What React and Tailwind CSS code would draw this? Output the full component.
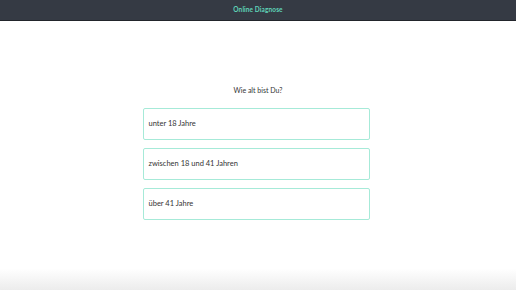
const options = ['unter 18 Jahre', 'zwischen 18 und 41 Jahren', 'über 41 Jahre'];

export default function App() {
  return (
    <div className="w-[516px] h-[290px] flex flex-col bg-white font-['Lato',sans-serif] overflow-hidden">
      <header className="h-[21px] shrink-0 bg-[#353a44] border-b border-[#22252b] flex items-center justify-center">
        <span className="text-[6.5px] font-bold text-[#5fd3b8] tracking-[0.1px]">Online Diagnose</span>
      </header>
      <main className="flex-1 flex flex-col items-center pt-[66px] bg-gradient-to-b from-white from-[92%] to-[#ececec]">
        <p className="text-[7px] text-[#333] leading-none">Wie alt bist Du?</p>
        <div className="mt-[14px] mr-[4px] flex flex-col gap-[8px] w-[227px]">
          {options.map((o) => (
            <button
              key={o}
              className="h-[32px] w-full text-left px-[5px] border border-[#a6ead8] rounded-[2px] bg-white text-[7.5px] text-[#333]"
            >
              {o}
            </button>
          ))}
        </div>
      </main>
    </div>
  );
}
